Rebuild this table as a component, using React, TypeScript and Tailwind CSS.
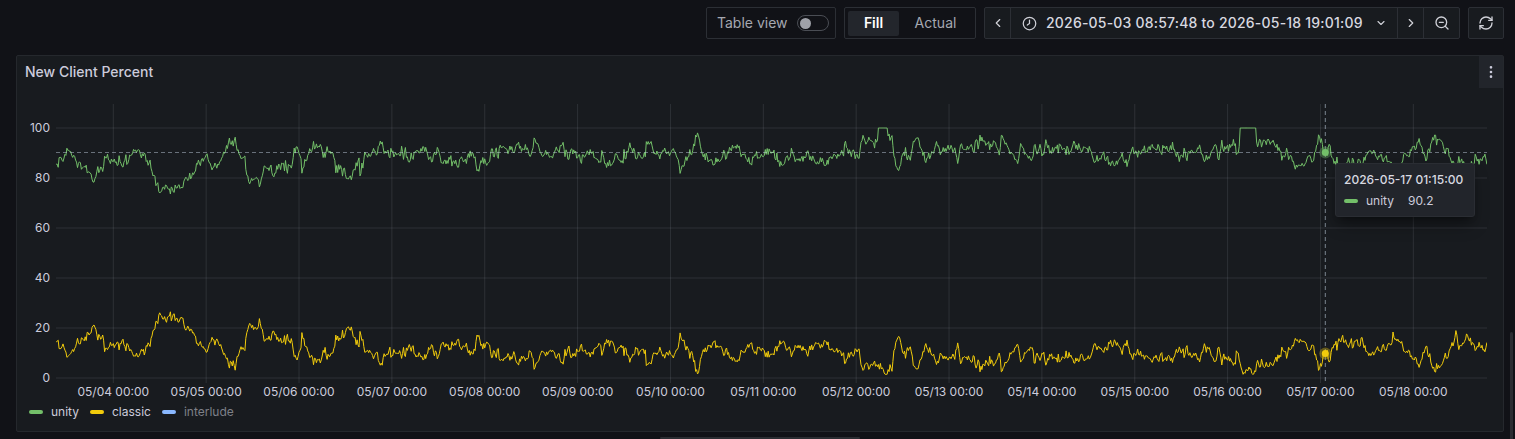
import * as React from "react";
import {
    ChevronDown,
    ChevronLeft,
    ChevronRight,
    EllipsisVertical,
    RefreshCw,
    ZoomOut,
} from "lucide-react";

// page-space geometry of the plot
const DAY0_X = 113.3;
const DAY_W = 92.86;
const ZERO_Y = 378;
const UNIT = 2.5;
const PLOT_L = 56;
const PLOT_R = 1487;

const dayX = (d: number) => DAY0_X + d * DAY_W;
const valY = (v: number) => ZERO_Y - v * UNIT;

// rough shape of the classic series, read off by eye (page x, value)
const knots: [number, number][] = [
    [55, 16], [64, 15], [70, 10], [80, 15], [95, 17], [110, 14], [125, 12], [140, 11],
    [150, 14], [157, 26], [165, 23], [180, 21], [195, 18], [205, 13], [220, 14],
    [230, 8], [235, 5], [245, 14], [250, 22], [260, 18], [275, 15], [290, 13],
    [300, 10], [320, 9], [335, 12], [345, 19], [355, 16], [370, 11], [380, 8],
    [390, 9], [410, 10], [430, 10], [445, 12], [460, 12], [480, 11], [500, 10],
    [520, 9], [540, 8], [560, 9], [580, 10], [600, 13], [620, 12], [640, 10],
    [660, 10], [680, 12], [692, 9], [698, 2], [704, 12], [720, 10], [740, 9],
    [760, 8], [780, 12], [800, 12], [820, 13], [840, 10], [860, 7], [876, 2],
    [889, 2], [893, 8], [897, 18], [905, 12], [920, 10], [940, 8], [960, 7],
    [980, 6], [1000, 9], [1020, 11], [1040, 8], [1060, 7], [1080, 8], [1100, 10],
    [1120, 11], [1140, 9], [1160, 8], [1180, 10], [1200, 10], [1220, 8], [1236, 4],
    [1240, 1], [1256, 1], [1262, 6], [1270, 7], [1285, 11], [1300, 14], [1325, 10],
    [1340, 12], [1360, 14], [1380, 11], [1400, 12], [1420, 9], [1440, 8],
    [1460, 12], [1488, 12],
];

const flatTops: [number, number][] = [
    [878, 888],
    [1240, 1256],
];

const knotAt = (x: number) => {
    for (let k = 1; k < knots.length; k++) {
        const [x1, y1] = knots[k];
        const [x0, y0] = knots[k - 1];
        if (x <= x1) return y0 + ((y1 - y0) * (x - x0)) / (x1 - x0);
    }
    return knots[knots.length - 1][1];
};

const mulberry32 = (a: number) => () => {
    a |= 0;
    a = (a + 0x6d2b79f5) | 0;
    let t = Math.imul(a ^ (a >>> 15), 1 | a);
    t = (t + Math.imul(t ^ (t >>> 7), 61 | t)) ^ t;
    return ((t ^ (t >>> 14)) >>> 0) / 4294967296;
};

const buildSeries = () => {
    const rand = mulberry32(20260517);
    const gauss = () => {
        const u = Math.max(rand(), 1e-9);
        return Math.sqrt(-2 * Math.log(u)) * Math.cos(2 * Math.PI * rand());
    };
    const startDay = -0.625;
    const endDay = 14.7917;
    const n = Math.round((endDay - startDay) * 96);
    const hover = Math.round((13.0521 - startDay) * 96);
    const xs: number[] = [];
    const yellow: number[] = [];
    const green: number[] = [];
    let ar = 0;
    let spike = 0;
    for (let i = 0; i <= n; i++) {
        const x = dayX(startDay + i / 96);
        ar = ar * 0.78 + gauss() * 1.35;
        if (rand() < 0.015) spike = (rand() < 0.5 ? -1 : 1) * (3 + rand() * 5);
        spike *= 0.82;
        let y = knotAt(x) + ar + spike;
        y = Math.min(29, Math.max(1.5, y));
        let g = 100 - y - 0.2 + gauss() * 0.4;
        g = Math.min(100, g);
        if (flatTops.some(([a, b]) => x >= a && x <= b)) g = 100;
        if (i === hover) {
            y = 9.8;
            g = 90.2;
        }
        xs.push(x);
        yellow.push(y);
        green.push(g);
    }
    const toPath = (vals: number[]) =>
        vals
            .map((v, i) => `${i ? "L" : "M"}${xs[i].toFixed(1)} ${valY(v).toFixed(1)}`)
            .join("");
    return { green: toPath(green), yellow: toPath(yellow) };
};

const ClockIcon: React.FC = () => (
    <svg width="15" height="15" viewBox="0 0 24 24" fill="none" stroke="currentColor" strokeWidth="2" strokeLinecap="round">
        <circle cx="12" cy="12" r="10" />
        <path d="M12 6.5V12L8.5 14.5" />
    </svg>
);

const Chart: React.FC = () => {
    const series = React.useMemo(buildSeries, []);
    const days = Array.from({ length: 15 }, (_, i) => i);
    const ticks = [0, 20, 40, 60, 80, 100];
    const hoverX = 1325.3;

    return (
        <svg width={1486} height={312} viewBox="17 88 1486 312" className="block">
            <defs>
                <clipPath id="plot">
                    <rect x={PLOT_L} y={100} width={PLOT_R - PLOT_L} height={282} />
                </clipPath>
            </defs>
            {ticks.map((t) => (
                <g key={t}>
                    <line x1={PLOT_L} x2={PLOT_R} y1={valY(t)} y2={valY(t)} stroke="rgba(240,250,255,0.1)" />
                    <text x={50} y={valY(t)} dy="0.35em" textAnchor="end" fontSize={12} fill="#ccccdc" fontFamily="Inter, sans-serif">
                        {t}
                    </text>
                </g>
            ))}
            {days.map((d) => (
                <g key={d}>
                    <line x1={dayX(d)} x2={dayX(d)} y1={104} y2={383} stroke="rgba(240,250,255,0.1)" />
                    <text x={dayX(d)} y={392} dy="0.35em" textAnchor="middle" fontSize={12} fill="#ccccdc" fontFamily="Inter, sans-serif">
                        {`05/${String(d + 4).padStart(2, "0")} 00:00`}
                    </text>
                </g>
            ))}
            <g clipPath="url(#plot)" fill="none" strokeWidth={1} strokeLinejoin="round">
                <path d={series.green} stroke="#73bf69" />
                <path d={series.yellow} stroke="#f2cc0c" />
            </g>
            <line x1={hoverX} x2={hoverX} y1={104} y2={384} stroke="rgba(204,220,235,0.55)" strokeDasharray="4 3" />
            <line x1={PLOT_L} x2={PLOT_R} y1={valY(90.2)} y2={valY(90.2)} stroke="rgba(204,220,235,0.45)" strokeDasharray="4 3" />
            <circle cx={hoverX} cy={valY(90.2)} r={6} fill="#73bf69" opacity={0.35} />
            <circle cx={hoverX} cy={valY(90.2)} r={3.5} fill="#73bf69" />
            <circle cx={hoverX} cy={valY(9.8)} r={6} fill="#f2cc0c" opacity={0.35} />
            <circle cx={hoverX} cy={valY(9.8)} r={3.5} fill="#f2cc0c" />
        </svg>
    );
};

const legend = [
    { name: "unity", color: "bg-[#73bf69]", text: "text-[#ccccdc]" },
    { name: "classic", color: "bg-[#f2cc0c]", text: "text-[#ccccdc]" },
    { name: "interlude", color: "bg-[#8ab8ff]", text: "text-[#7e8088]" },
];

export default function App() {
    return (
        <div className="relative h-[439px] w-full overflow-hidden bg-[#111217] font-['Inter',sans-serif] text-[#ccccdc]">
            {/* toolbar */}
            <div className="flex h-[55px] items-start justify-end gap-2 pt-[7px] pr-[11px]">
                <div className="flex h-8 w-[130px] items-center gap-[9px] rounded-[2px] border border-[#2c2f35] pl-[10px]">
                    <span className="text-sm text-[#a5a8b1]">Table view</span>
                    <span className="flex h-4 w-8 items-center rounded-full border border-[#4a4d54] px-[2px]">
                        <span className="h-[11px] w-[11px] rounded-full bg-[#9fa1a8]" />
                    </span>
                </div>
                <div className="flex h-8 w-[132px] items-center rounded-[2px] border border-[#2c2f35] p-[3px]">
                    <span className="flex h-[25px] w-[51px] items-center justify-center rounded-[2px] bg-[#23262c] text-sm font-semibold text-white">
                        Fill
                    </span>
                    <span className="flex flex-1 items-center justify-center text-sm text-[#a5a8b1]">Actual</span>
                </div>
                <div className="flex h-8 items-stretch rounded-[2px] border border-[#2c2f35] bg-[#181b1f] text-[#d0d1d8]">
                    <span className="flex w-[26px] items-center justify-center border-r border-[#2c2f35]">
                        <ChevronLeft size={14} strokeWidth={2} />
                    </span>
                    <span className="flex w-[386px] items-center pl-[11px] pr-[10px]">
                        <ClockIcon />
                        <span className="ml-[9px] text-sm font-medium tracking-[0.2px] text-[#d8d9e0]">
                            2026-05-03 08:57:48 to 2026-05-18 19:01:09
                        </span>
                        <ChevronDown size={12} strokeWidth={2.2} className="ml-auto" />
                    </span>
                    <span className="flex w-[27px] items-center justify-center border-x border-[#2c2f35]">
                        <ChevronRight size={14} strokeWidth={2} />
                    </span>
                    <span className="flex w-[35px] items-center justify-center">
                        <ZoomOut size={16} strokeWidth={2} />
                    </span>
                </div>
                <div className="flex h-8 w-[36px] items-center justify-center rounded-[2px] border border-[#2c2f35] bg-[#181b1f] text-[#d0d1d8]">
                    <RefreshCw size={16} strokeWidth={2} />
                </div>
            </div>

            {/* panel */}
            <div className="ml-4 mr-[11px] flex flex-col rounded-[2px] border border-[#25282d] bg-[#181b1f] pb-[7px]">
                <div className="flex h-8 items-center justify-between pl-2">
                    <h2 className="text-sm font-medium text-[#ccccdc]">New Client Percent</h2>
                    <span className="flex h-8 w-6 items-center justify-center bg-[#22252b] text-[#ccccdc]">
                        <EllipsisVertical size={16} strokeWidth={2} />
                    </span>
                </div>
                <Chart />
                <div className="flex h-6 items-center gap-[11px] pl-3 text-xs">
                    {legend.map((l) => (
                        <div key={l.name} className="flex items-center gap-2">
                            <span className={`h-[4px] w-[14px] rounded-full ${l.color}`} />
                            <span className={l.text}>{l.name}</span>
                        </div>
                    ))}
                </div>
            </div>

            {/* hover tooltip */}
            <div className="absolute left-[1335px] top-[163px] flex h-[54px] w-[140px] flex-col justify-center gap-[5px] rounded-[3px] border border-[#2a2d33] bg-[#22252b] px-2 text-xs shadow-lg shadow-black/40">
                <span className="font-medium text-[#d8d9e0]">2026-05-17 01:15:00</span>
                <div className="flex items-center">
                    <span className="h-[4px] w-[14px] rounded-full bg-[#73bf69]" />
                    <span className="ml-2 text-[#ccccdc]">unity</span>
                    <span className="ml-[14px] text-[#ccccdc]">90.2</span>
                </div>
            </div>

            {/* scroll thumbs */}
            <div className="absolute right-[2px] top-[332px] h-[110px] w-[3px] rounded-full bg-[#2b2d32]" />
            <div className="absolute bottom-0 left-[660px] h-[2px] w-[200px] rounded-full bg-[#2b2d32]" />
        </div>
    );
}
